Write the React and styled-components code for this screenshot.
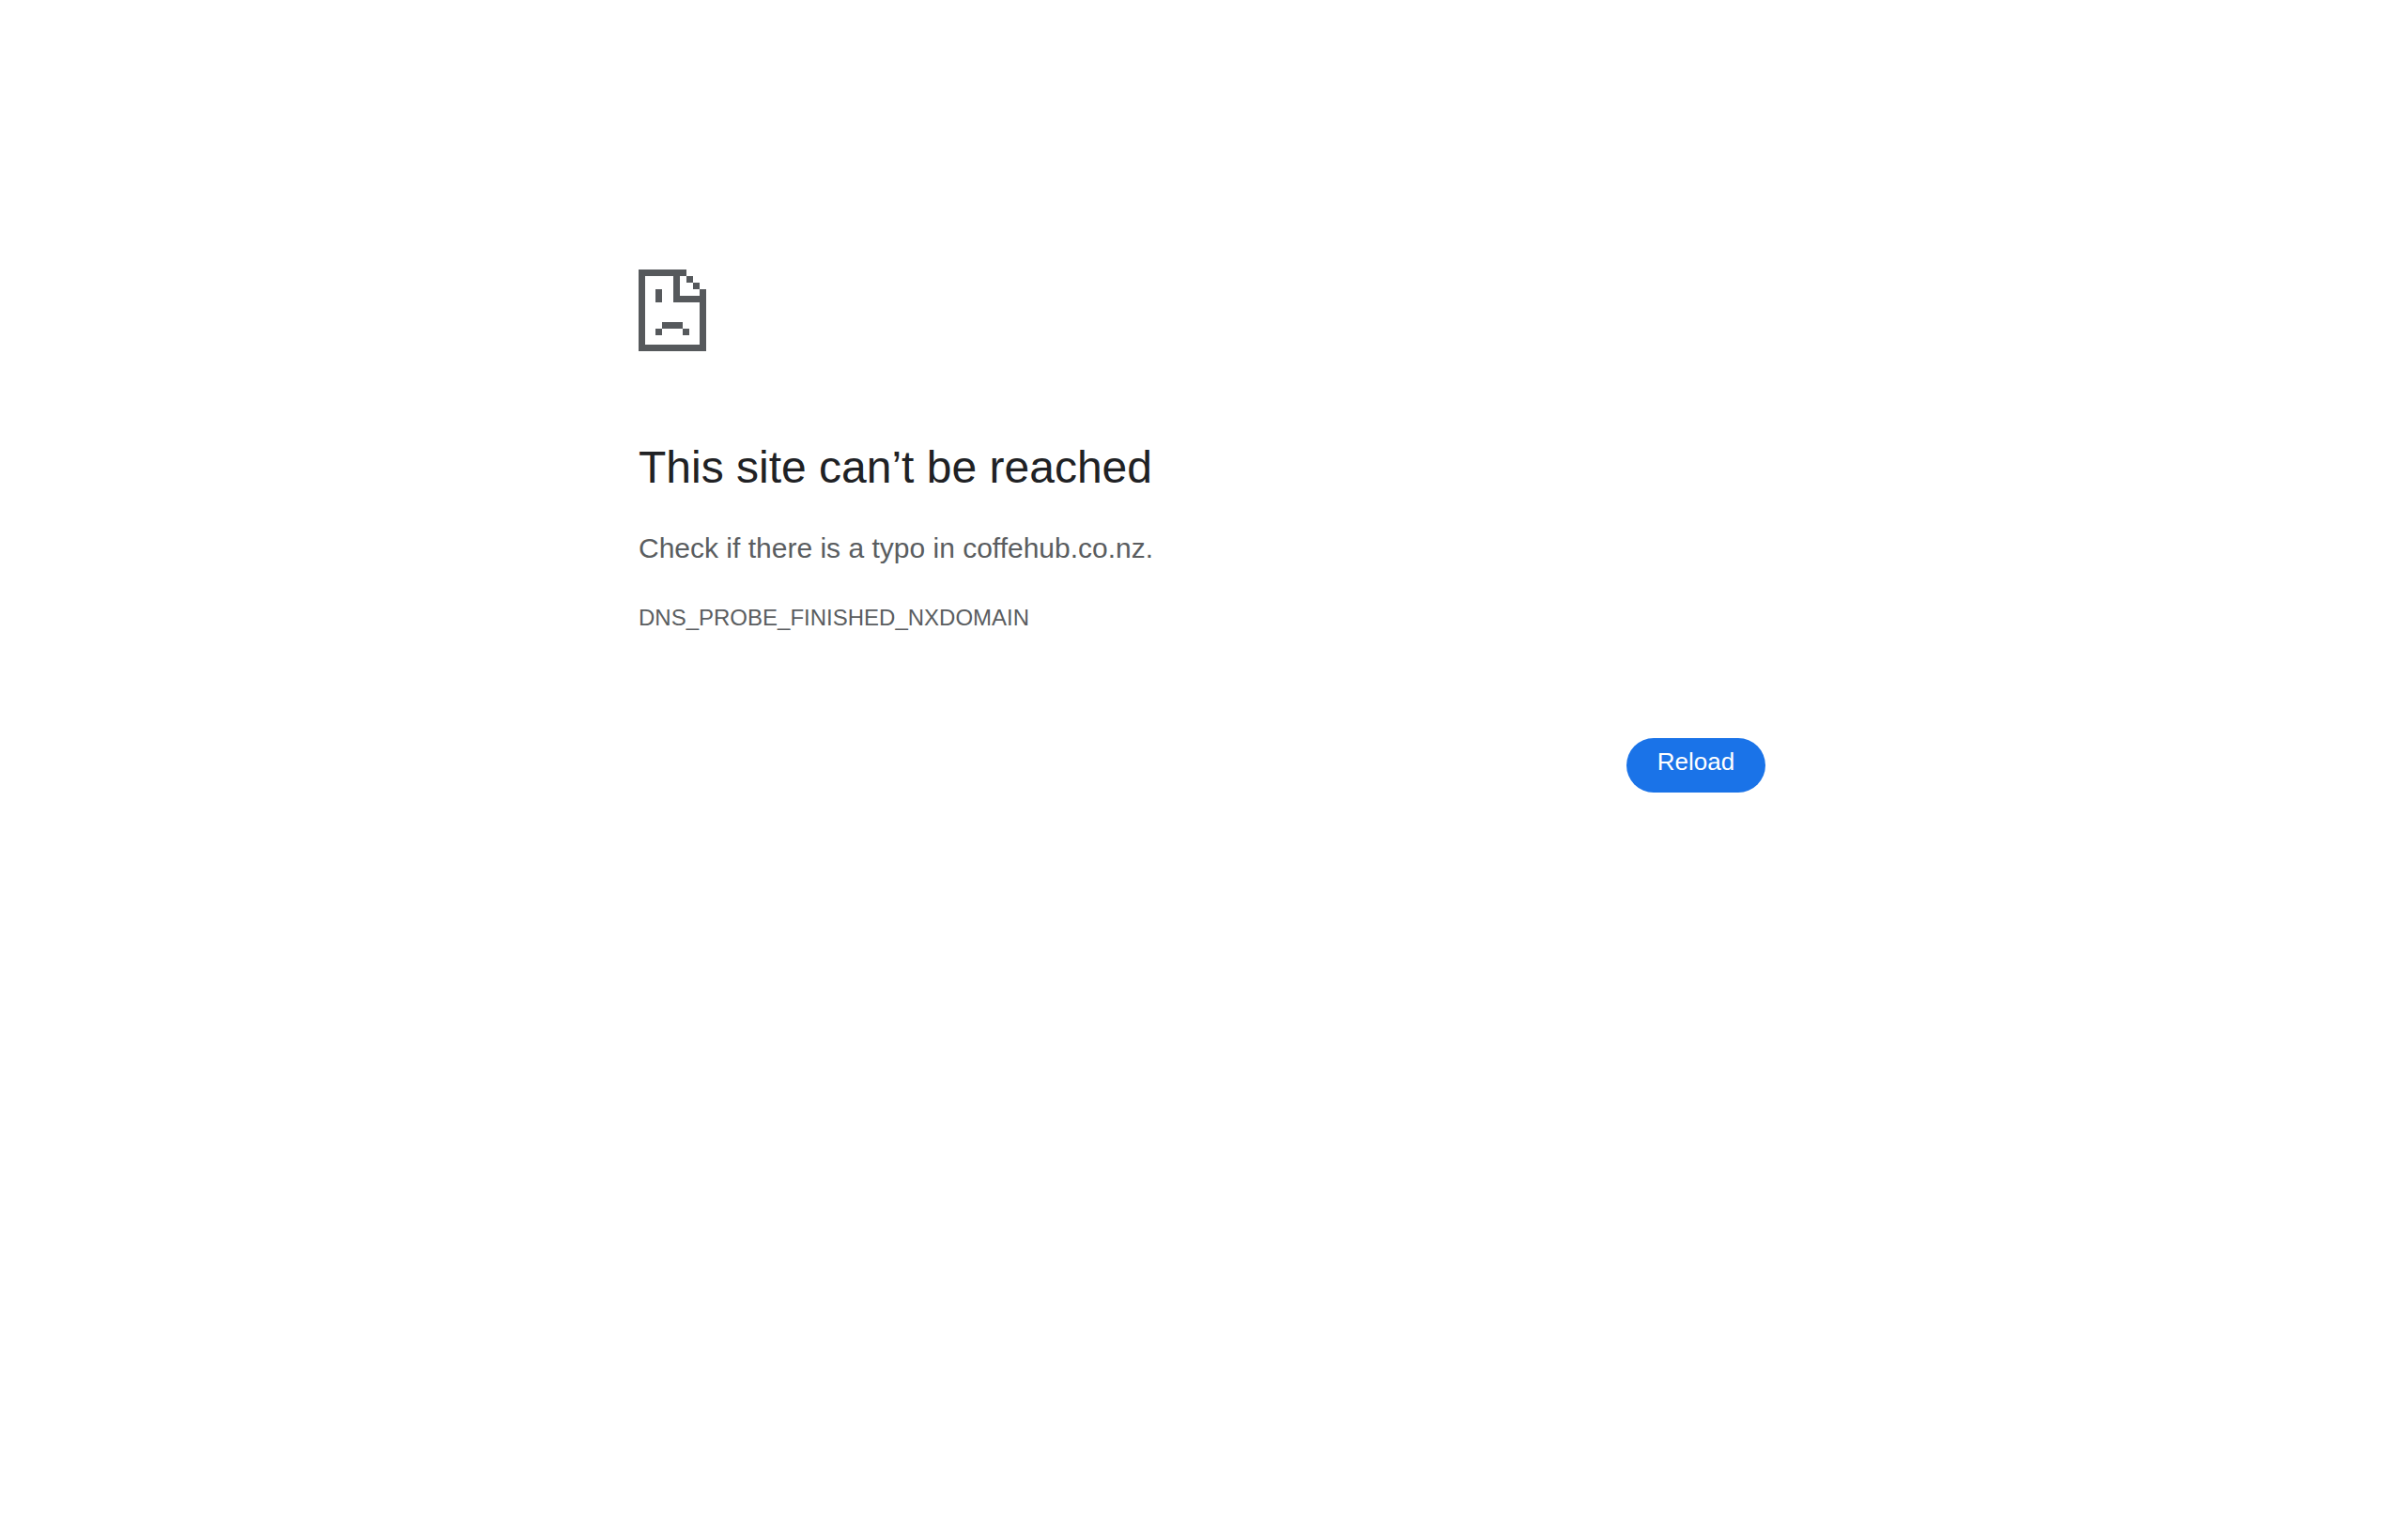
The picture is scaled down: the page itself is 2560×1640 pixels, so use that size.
import React from "react";
import styled, { createGlobalStyle } from "styled-components";

const GlobalStyle = createGlobalStyle`
  *, *::before, *::after {
    box-sizing: border-box;
  }
  body {
    margin: 0;
    background: #fff;
    color: #5a5d60;
    font-family: Helvetica, "Liberation Sans", Arial, sans-serif;
    font-size: 30px;
  }
`;

const Page = styled.main`
  width: 100%;
  max-width: 1200px;
  margin: 0 auto;
  padding-top: 287px;
  display: flex;
  flex-direction: column;
`;

const SadPage = styled.svg`
  display: block;
  width: 72px;
  height: 87px;
  fill: #56595c;
`;

const Title = styled.h1`
  margin: 94px 0 0;
  color: #202124;
  font-size: 48px;
  font-weight: 400;
  line-height: 60px;
`;

const Summary = styled.p`
  margin: 33px 0 0;
  line-height: 46px;
`;

const ErrorCode = styled.p`
  margin: 33px 0 0;
  font-size: 24px;
  line-height: 36px;
`;

const Actions = styled.div`
  display: flex;
  justify-content: flex-end;
  margin-top: 110px;
`;

const Button = styled.button`
  min-width: 148px;
  height: 58px;
  padding: 0 32px 8px;
  border: 0;
  border-radius: 29px;
  background: #1a73e8;
  color: #fff;
  font-family: inherit;
  font-size: 26px;
  line-height: 50px;
  cursor: pointer;
`;

export default function App() {
  return (
    <>
      <GlobalStyle />
      <Page>
        <SadPage viewBox="0 0 72 87" shapeRendering="crispEdges" aria-hidden="true">
          {/* page outline */}
          <path d="M0 0H51V7H7V80H65V35H37V7H44V28H65V21H72V87H0Z" />
          {/* folded corner */}
          <path d="M51 7h7v7h-7zM58 14h7v7h-7z" />
          {/* eye and mouth */}
          <path d="M18 21h7v14h-7zM25 56h22v7H25zM18 63h7v7h-7zM47 63h7v7h-7z" />
        </SadPage>
        <Title>This site can’t be reached</Title>
        <Summary>Check if there is a typo in coffehub.co.nz.</Summary>
        <ErrorCode>DNS_PROBE_FINISHED_NXDOMAIN</ErrorCode>
        <Actions>
          <Button type="button" onClick={() => window.location.reload()}>
            Reload
          </Button>
        </Actions>
      </Page>
    </>
  );
}
